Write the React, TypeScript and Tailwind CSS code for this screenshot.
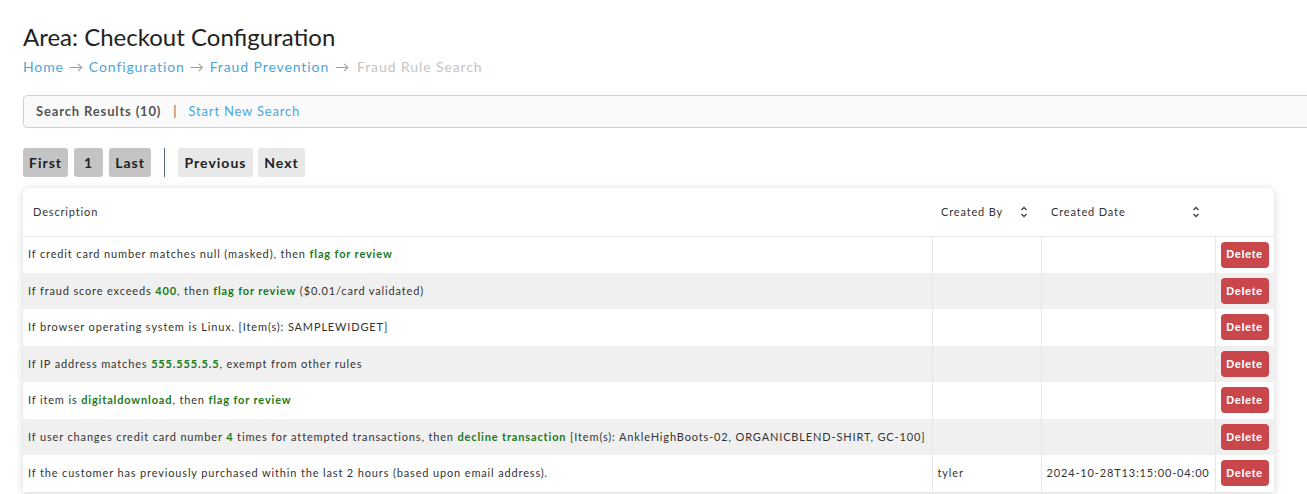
import React from "react";

type Part = string | { g: string };

const rows: { desc: Part[]; by?: string; date?: string }[] = [
  { desc: ["If credit card number matches null (masked), then ", { g: "flag for review" }] },
  { desc: ["If fraud score exceeds ", { g: "400" }, ", then ", { g: "flag for review" }, " ($0.01/card validated)"] },
  { desc: ["If browser operating system is Linux. [Item(s): SAMPLEWIDGET]"] },
  { desc: ["If IP address matches ", { g: "555.555.5.5" }, ", exempt from other rules"] },
  { desc: ["If item is ", { g: "digitaldownload" }, ", then ", { g: "flag for review" }] },
  {
    desc: [
      "If user changes credit card number ",
      { g: "4" },
      " times for attempted transactions, then ",
      { g: "decline transaction" },
      " [Item(s): AnkleHighBoots-02, ORGANICBLEND-SHIRT, GC-100]",
    ],
  },
  {
    desc: ["If the customer has previously purchased within the last 2 hours (based upon email address)."],
    by: "tyler",
    date: "2024-10-28T13:15:00-04:00",
  },
];

const SortIcon = () => (
  <svg width="8" height="12" viewBox="0 0 8 12" fill="none" stroke="#444" strokeWidth="1.4">
    <path d="M1.5 4 L4 1.5 L6.5 4" />
    <path d="M1.5 8 L4 10.5 L6.5 8" />
  </svg>
);

const App = () => {
  return (
    <div className="min-h-[494px] bg-white px-[23px] pt-[22px] font-['Lato',sans-serif] text-[#333] overflow-hidden">
      <h1 className="text-[24px] leading-[30px] text-[#222]">Area: Checkout Configuration</h1>

      <div className="mt-[6px] flex items-center text-[14px] tracking-[0.9px] leading-[18px]">
        <span className="text-[#4ba6dc]">Home</span>
        <span className="mx-[5px] text-[#999]">→</span>
        <span className="text-[#4ba6dc]">Configuration</span>
        <span className="mx-[5px] text-[#999]">→</span>
        <span className="text-[#4ba6dc]">Fraud Prevention</span>
        <span className="ml-[6px] mr-[7px] text-[#999]">→</span>
        <span className="text-[#c4c4c4]">Fraud Rule Search</span>
      </div>

      <div className="mt-[19px] -mr-[40px] flex h-[33px] items-center rounded-[4px] border border-[#d0d0d0] bg-[#fafafa] pl-[12px] text-[13px]">
        <span className="font-bold tracking-[0.85px] text-[#555]">Search Results (10)</span>
        <span className="ml-[12px] mr-[12px] text-[#666]">|</span>
        <span className="tracking-[0.8px] text-[#4ba6dc]">Start New Search</span>
      </div>

      <div className="mt-[20px] flex items-center text-[14px] font-bold tracking-[1px] text-[#222]">
        <button className="h-[29px] w-[45px] rounded-[3px] bg-[#c4c4c4]">First</button>
        <button className="ml-[6px] h-[29px] w-[29px] rounded-[3px] bg-[#c4c4c4]">1</button>
        <button className="ml-[6px] h-[29px] w-[42px] rounded-[3px] bg-[#c4c4c4]">Last</button>
        <div className="ml-[13px] mr-[13px] h-[29px] w-[1px] bg-[#56677a]" />
        <button className="h-[29px] w-[75px] rounded-[3px] bg-[#e8e8e8]">Previous</button>
        <button className="ml-[5px] h-[29px] w-[47px] rounded-[3px] bg-[#e8e8e8]">Next</button>
      </div>

      <div className="mt-[11px] w-[1251px] rounded-t-[6px] bg-white shadow-[0_1px_9px_rgba(0,0,0,0.17)]">
        <table className="w-full table-fixed border-collapse text-[11px] tracking-[0.85px]">
          <colgroup>
            <col className="w-[909px]" />
            <col className="w-[109px]" />
            <col className="w-[174px]" />
            <col className="w-[59px]" />
          </colgroup>
          <thead>
            <tr className="h-[48px] border-b border-[#e6e6e6] text-left text-[#333]">
              <th className="pl-[10px] font-normal">Description</th>
              <th className="pl-[9px] font-normal">
                <div className="flex items-center justify-between pr-[13px]">
                  <span>Created By</span>
                  <SortIcon />
                </div>
              </th>
              <th className="pl-[10px] font-normal">
                <div className="flex items-center justify-between pr-[15px]">
                  <span>Created Date</span>
                  <SortIcon />
                </div>
              </th>
              <th />
            </tr>
          </thead>
          <tbody>
            {rows.map((r, i) => (
              <tr key={i} className={`h-[36.5px] ${i % 2 === 1 ? "bg-[#f0f0f0]" : "bg-white"}`}>
                <td className="pl-[5px] whitespace-nowrap">
                  {r.desc.map((p, j) =>
                    typeof p === "string" ? (
                      <span key={j}>{p}</span>
                    ) : (
                      <span key={j} className="font-bold text-[#1a7a1a]">
                        {p.g}
                      </span>
                    )
                  )}
                </td>
                <td className="border-l border-[#e6e6e6] pl-[5px]">{r.by}</td>
                <td className="border-l border-[#e6e6e6] pl-[5px] whitespace-nowrap">{r.date}</td>
                <td className="border-l border-[#e6e6e6] pl-[5px]">
                  <button className="h-[26px] w-[48px] rounded-[4px] bg-[#c9474b] font-['Liberation_Sans',Arial,sans-serif] text-[11px] font-bold tracking-[0.6px] text-white">
                    Delete
                  </button>
                </td>
              </tr>
            ))}
          </tbody>
        </table>
      </div>
    </div>
  );
};

export default App;
